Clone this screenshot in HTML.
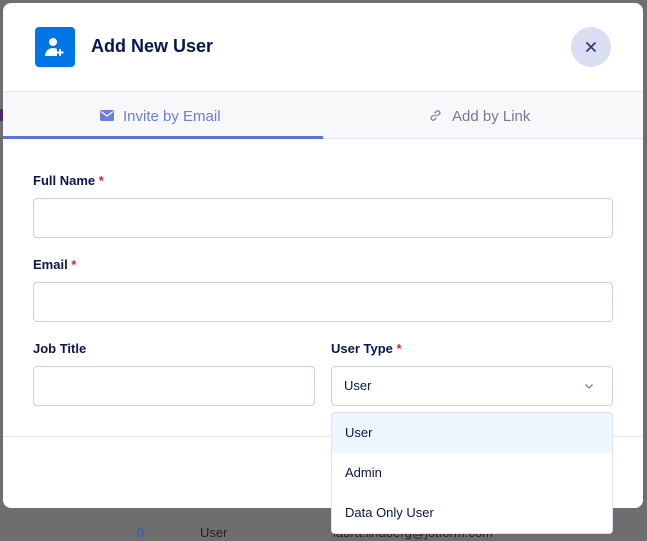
<!DOCTYPE html>
<html><head><meta charset="utf-8"><style>
*{box-sizing:border-box;margin:0;padding:0}
body{width:647px;height:541px;background:#6e6e70;font-family:"Liberation Sans",sans-serif;position:relative;overflow:hidden;color:#0a1551}
.abs{position:absolute}
.modal{left:3px;top:3px;width:640px;height:505px;background:#fff;border-radius:8px;overflow:hidden}
.lbl{font-size:13px;font-weight:bold;color:#0a1551}
.lbl span{color:#d9252f}
.inp{border:1px solid #c8ceed;border-radius:4px;background:#fff;height:40px}
.opt{font-size:13px;color:#0a1551;padding-left:13px;height:40px;line-height:40px}
</style></head><body>
<div class="abs" style="left:0;top:109px;width:3px;height:12px;background:#4a2a6e"></div>
<div class="abs" style="left:137px;top:525px;font-size:13px;color:#2b5bb0">0</div>
<div class="abs" style="left:200px;top:525px;font-size:13px;color:#222">User</div>
<div class="abs" style="left:333px;top:525px;font-size:13px;color:#222">laura.lindberg@jotform.com</div>
<div class="abs modal">
  <div class="abs" style="left:32px;top:24px;width:40px;height:40px;background:#0075e3;border-radius:4px">
    <svg width="40" height="40" viewBox="0 0 40 40"><circle cx="18" cy="15" r="4" fill="#fff"/><path d="M10 29c0-5 4-8 8-8 2 0 3 .5 4 1v7z" fill="#fff"/><path d="M25 22v7M21.5 25.5h7" stroke="#fff" stroke-width="2"/></svg>
  </div>
  <div class="abs" style="left:88px;top:33px;font-size:18px;font-weight:bold;color:#0a1551">Add New User</div>
  <div class="abs" style="left:568px;top:24px;width:40px;height:40px;border-radius:50%;background:#dadef3">
    <svg width="40" height="40"><path d="M15.5 15.5l9 9M24.5 15.5l-9 9" stroke="#343c6a" stroke-width="1.8"/></svg>
  </div>
  <div class="abs" style="left:0;top:88px;width:640px;height:48px;background:#f8f8fb;border-top:1px solid #e3e5f2;border-bottom:1px solid #e3e5f2"></div>
  <div class="abs" style="left:0;top:133px;width:320px;height:3px;background:#5d73e0"></div>
  <svg class="abs" style="left:97px;top:107px" width="14" height="11"><rect x="0" y="0" width="14" height="11" rx="1.5" fill="#6b7ce0"/><path d="M1 1.5l6 4.5 6-4.5" stroke="#fff" stroke-width="1.3" fill="none"/></svg>
  <div class="abs" style="left:120px;top:105px;font-size:15px;color:#6b7ce0">Invite by Email</div>
  <svg class="abs" style="left:426px;top:106px" width="13" height="13" viewBox="0 0 13 13"><path d="M5.5 7.5l2-2M4.5 6l-2 2a2 2 0 0 0 2.8 2.8l2-2M8.5 7l2-2a2 2 0 0 0-2.8-2.8l-2 2" stroke="#747998" stroke-width="1.2" fill="none"/></svg>
  <div class="abs" style="left:449px;top:105px;font-size:15px;color:#747998">Add by Link</div>

  <div class="abs lbl" style="left:30px;top:170px">Full Name <span>*</span></div>
  <div class="abs inp" style="left:30px;top:195px;width:580px"></div>
  <div class="abs lbl" style="left:30px;top:254px">Email <span>*</span></div>
  <div class="abs inp" style="left:30px;top:279px;width:580px"></div>
  <div class="abs lbl" style="left:30px;top:338px">Job Title</div>
  <div class="abs inp" style="left:30px;top:363px;width:282px"></div>
  <div class="abs lbl" style="left:328px;top:338px">User Type <span>*</span></div>
  <div class="abs inp" style="left:328px;top:363px;width:282px"><div class="opt" style="line-height:38px;padding-left:12px">User</div>
    <svg class="abs" style="left:252px;top:16px" width="10" height="7"><path d="M1.5 1.5l3.5 3.5 3.5-3.5" stroke="#7a80a4" stroke-width="1.3" fill="none"/></svg></div>
  <div class="abs" style="left:0;top:433px;width:640px;height:1px;background:#e3e5f2"></div>
</div>
<div class="abs" style="left:331px;top:412px;width:282px;height:122px;background:#fff;border:1px solid #dfe2f2;border-radius:4px;overflow:hidden">
  <div class="opt" style="background:#edf6fe">User</div>
  <div class="opt">Admin</div>
  <div class="opt">Data Only User</div>
</div>
</body></html>
